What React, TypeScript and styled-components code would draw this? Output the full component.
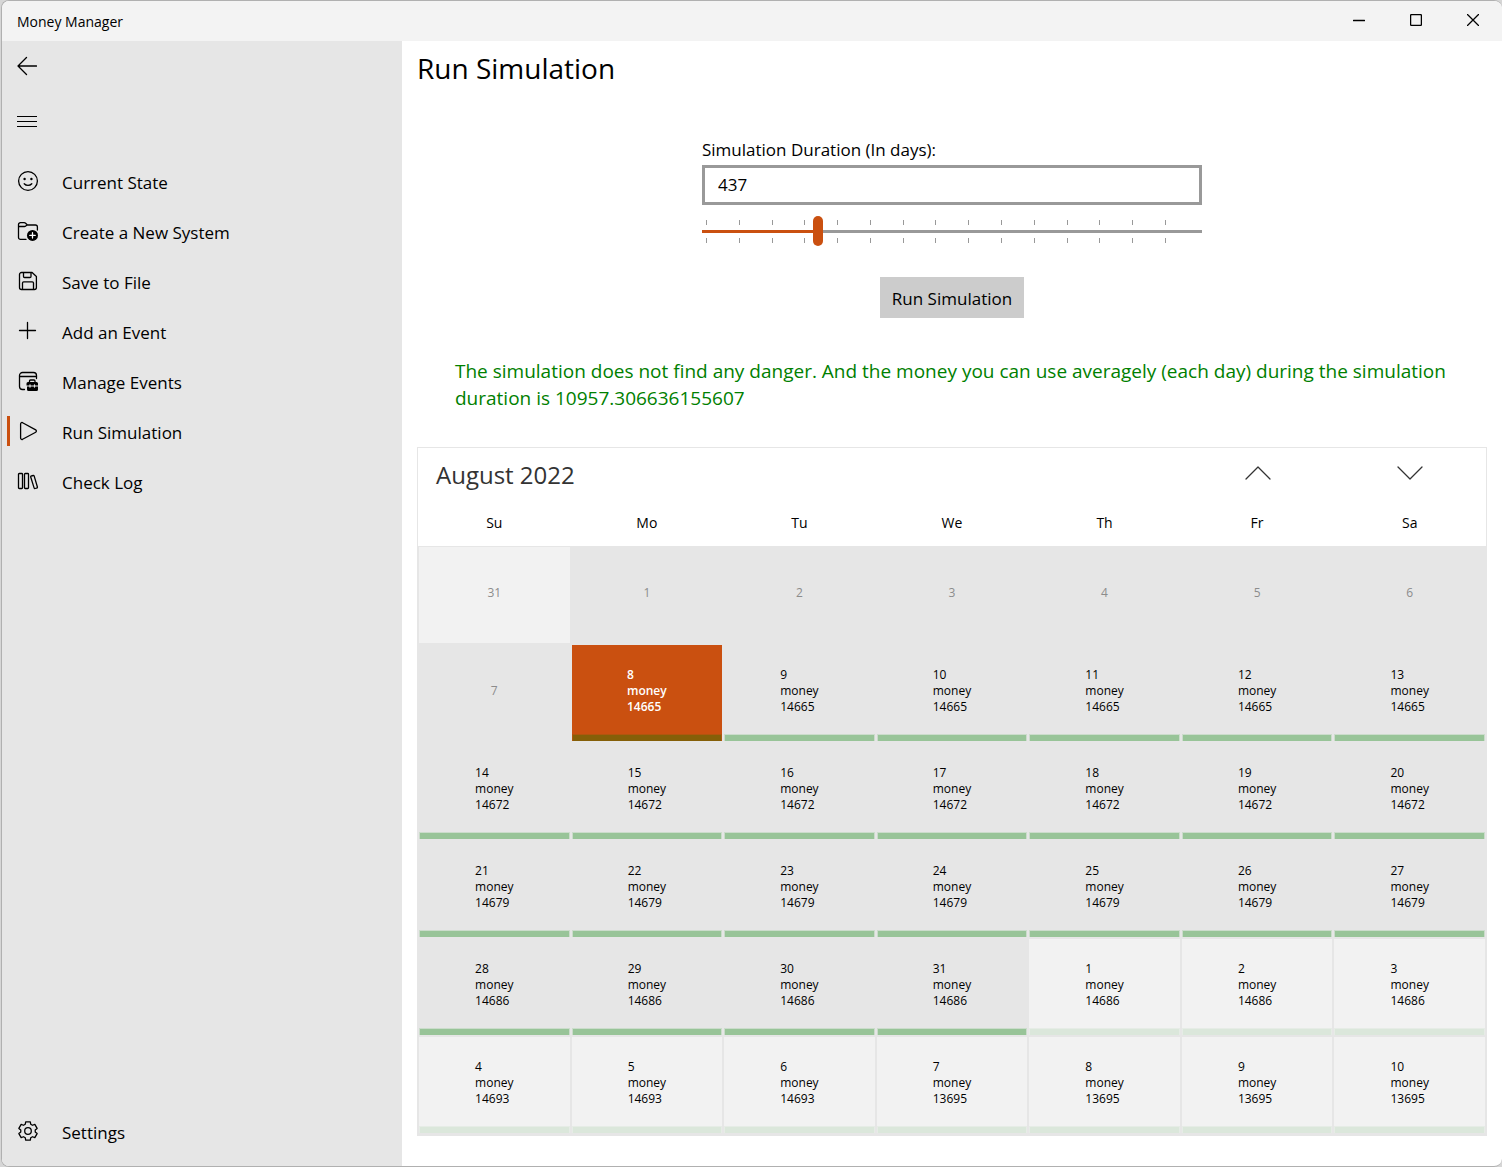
import React, { useState } from "react";
import styled, { createGlobalStyle } from "styled-components";

const accent = "#ca5010";

const GlobalStyle = createGlobalStyle`
  *, *::before, *::after { box-sizing: border-box; }
  body {
    margin: 0;
    background: #d6d6d6;
    color: #000;
    font-family: "Open Sans", "Noto Sans", sans-serif;
    font-size: 17px;
  }
  button, input { font: inherit; color: inherit; }
`;

const Window = styled.div`
  display: flex;
  flex-direction: column;
  min-height: 100vh;
  margin-left: 1px;
  border: 1px solid #b0b0b0;
  border-right: 0;
  border-radius: 8px;
  background: #fff;
  overflow: hidden;
`;

const TitleBar = styled.header`
  display: flex;
  align-items: center;
  justify-content: space-between;
  height: 40px;
  padding: 0 1px 0 15px;
  background: #f3f3f3;
  font-size: 14px;
`;

const Caption = styled.div`
  display: flex;
  height: 100%;
`;

const PlainButton = styled.button`
  display: flex;
  align-items: center;
  justify-content: center;
  padding: 0;
  border: 0;
  background: transparent;
`;

const CaptionButton = styled(PlainButton)`
  width: 57px;
  height: 38px;
`;

const Body = styled.div`
  display: flex;
  flex: 1;
`;

const Sidebar = styled.nav`
  display: flex;
  flex-direction: column;
  flex: 0 0 400px;
  padding-bottom: 9px;
  background: #e6e6e6;
`;

const PaneButton = styled(PlainButton)`
  width: 50px;
  height: 50px;
  margin-bottom: 5px;
`;

const NavList = styled.ul`
  flex: 1;
  margin: 6px 0 0;
  padding: 0;
  list-style: none;
`;

const NavLink = styled.a<{ $active?: boolean }>`
  position: relative;
  display: flex;
  align-items: center;
  gap: 22px;
  height: 50px;
  padding-left: 14px;
  color: inherit;
  text-decoration: none;

  &::before {
    content: "";
    display: ${(p) => (p.$active ? "block" : "none")};
    position: absolute;
    left: 5px;
    top: 9px;
    width: 3px;
    height: 30px;
    background: ${accent};
  }
`;

const Icon = styled.svg`
  flex: none;
  fill: none;
  stroke: currentColor;
  stroke-width: 1.3;
  stroke-linecap: round;
  stroke-linejoin: round;
`;

const Main = styled.main`
  flex: 1;
  min-width: 0;
  padding: 8px 15px 30px;
`;

const PageTitle = styled.h1`
  margin: 0;
  font-size: 28px;
  font-weight: 400;
  line-height: 38px;
`;

const Form = styled.form`
  display: flex;
  flex-direction: column;
  width: 100%;
  max-width: 500px;
  margin: 50px auto 0;
`;

const Label = styled.label`
  padding-bottom: 2px;
  line-height: 26px;
`;

const DaysInput = styled.input`
  height: 40px;
  padding: 0 13px 2px;
  border: 3px solid #999;
  background: #fff;
  outline: 0;
`;

const SliderBox = styled.div`
  display: grid;
  height: 30px;
  margin-top: 11px;
  > * { grid-area: 1 / 1; }
`;

const Ticks = styled.div`
  display: flex;
  justify-content: space-between;
  margin: 4px 36px 3px 4px;
`;

const Tick = styled.span`
  width: 1px;
  border: solid #999;
  border-width: 5px 0;
`;

const Slider = styled.input`
  appearance: none;
  width: 100%;
  height: 30px;
  margin: 0;
  background: transparent;

  &::-webkit-slider-runnable-track {
    height: 3px;
    background: linear-gradient(${accent}, ${accent}) 0 0 / var(--filled) 100% no-repeat #999;
  }
  &::-webkit-slider-thumb {
    appearance: none;
    width: 10px;
    height: 30px;
    margin-top: -14px;
    border-radius: 5px;
    background: ${accent};
  }
`;

const RunButton = styled.button`
  align-self: center;
  width: 144px;
  height: 41px;
  margin-top: 31px;
  padding: 2px 0 0;
  border: 0;
  background: #ccc;
`;

const Result = styled.p`
  margin: 40px 0 35px;
  padding: 0 30px 0 38px;
  color: #008000;
  font-size: 19px;
  line-height: 27px;
`;

const Calendar = styled.section`
  border: 1px solid #e6e6e6;
  border-bottom-width: 2px;
`;

const CalendarBar = styled.div`
  display: grid;
  grid-template-columns: repeat(7, 1fr);
  align-items: center;
  height: 52px;
`;

const Month = styled.h2`
  grid-column: span 5;
  margin: 0;
  padding-left: 18px;
  color: #333;
  font-size: 24px;
  font-weight: 400;
`;

const MonthButton = styled(PlainButton)`
  height: 100%;
  padding: 0 0 2px 1px;
  color: #333;
`;

const Grid = styled.table`
  width: 100%;
  table-layout: fixed;
  border-collapse: collapse;

  th {
    height: 46px;
    padding: 0 0 2px;
    font-size: 14px;
    font-weight: 400;
  }
  td {
    height: 98px;
    padding: 1px;
    background: #e6e6e6;
  }
`;

type Tone = "normal" | "outside" | "selected";
const face = { normal: "#e6e6e6", outside: "#f2f2f2", selected: accent };
const bar = { normal: "#98c498", outside: "#dbe7db", selected: "#855f08" };
const barEdge = { normal: "#cbdccb", outside: "#e6ece6", selected: "#b0560d" };

const Day = styled.button<{ $tone: Tone }>`
  display: flex;
  flex-direction: column;
  align-items: center;
  width: 100%;
  height: 96px;
  padding: 0;
  border: 0;
  background: ${(p) => face[p.$tone]};
  color: ${(p) => (p.$tone === "selected" ? "#fff" : "#000")};
  font-size: 12px;
  font-weight: ${(p) => (p.$tone === "selected" ? 600 : 400)};
  line-height: 16px;
  text-align: left;

  &:disabled { color: #8c8c8c; }
`;

const DayText = styled.span`
  display: flex;
  flex: 1;
  flex-direction: column;
  justify-content: center;
  padding-top: 2px;
`;

const DensityBar = styled.span<{ $tone: Tone }>`
  align-self: stretch;
  height: 7px;
  border: 1px solid ${(p) => barEdge[p.$tone]};
  border-bottom: 0;
  background: ${(p) => bar[p.$tone]};
`;

const Spacer = styled.span`
  height: 7px;
`;

const gearPath = (() => {
  const points: string[] = [];
  for (let i = 0; i < 6; i++) {
    const shape: [number, number][] = [[-22, 7.3], [-14, 9.5], [14, 9.5], [22, 7.3]];
    shape.forEach(([offset, r]) => {
      const a = ((i * 60 + offset) * Math.PI) / 180;
      points.push(`${(12 + r * Math.sin(a)).toFixed(2)} ${(11 - r * Math.cos(a)).toFixed(2)}`);
    });
  }
  return `M${points.join("L")}Z`;
})();

const icons = {
  smile: (
    <>
      <circle cx="12" cy="11" r="9.4" />
      <path d="M8.2 13.8c2 2.2 5.6 2.2 7.6 0" />
      <g fill="currentColor" stroke="none">
        <circle cx="8.6" cy="9" r="1.2" />
        <circle cx="15.4" cy="9" r="1.2" />
      </g>
    </>
  ),
  folder: (
    <>
      <path d="M10 19.4H4.5a2 2 0 0 1-2-2V4.6a2 2 0 0 1 2-2h3.7c.6 0 1 .2 1.4.6L11.4 5h8a2 2 0 0 1 2 2v3M2.5 6.5h6c.5 0 .9-.2 1.2-.5l1.500-1" />
      <circle cx="16.5" cy="15.4" r="5.5" fill="currentColor" stroke="none" />
      <path d="M16.5 12.7v5.4M13.8 15.4h5.4" stroke="#fff" />
    </>
  ),
  save: (
    <path d="M5.5 2.5h10.6L20.4 6.4V17.5a2 2 0 0 1-2 2H5.5a2 2 0 0 1-2-2V4.5a2 2 0 0 1 2-2ZM7.5 2.5v4a1 1 0 0 0 1 1h5.5a1 1 0 0 0 1-1v-4M6.5 19.5v-6.5a1.2 1.2 0 0 1 1.2-1.2h8.6a1.2 1.2 0 0 1 1.2 1.2v6.5" />
  ),
  plus: <path d="M11.5 2.5v16M3.5 10.5h16" />,
  manage: (
    <>
      <path d="M8.5 19.5H6.5a3 3 0 0 1-3-3V5.5a3 3 0 0 1 3-3h11a3 3 0 0 1 3 3v3M3.5 6.5h17" />
      <path
        stroke="none"
        fill="currentColor"
        d="M10.5 13.5a1.5 1.5 0 0 1 1.5-1.5h8.5a1.5 1.5 0 0 1 1.5 1.5v2H10.5ZM11 16.5h11v3a1.5 1.5 0 0 1-1.5 1.5h-8a1.5 1.5 0 0 1-1.5-1.5Z"
      />
      <path d="M13.5 12v-1a1 1 0 0 1 1-1h3.5a1 1 0 0 1 1 1v1" />
      <path d="M14 15v2M18.5 15v2" stroke="#e6e6e6" />
    </>
  ),
  play: <path d="M4.6 3.9v14.2c0 1.1 1 1.7 2 1.2L19.7 12.2c.9-.5.9-1.8 0-2.3L6.6 2.7c-1-.5-2 .1-2 1.2Z" />,
  books: (
    <path d="M3.3 3.5h2.4a.8.8 0 0 1 .8.8V17.7a.8.8 0 0 1-.8.8H3.3a.8.8 0 0 1-.8-.8V4.3a.8.8 0 0 1 .8-.8ZM9.3 3.5h2.4a.8.8 0 0 1 .8.8V17.7a.8.8 0 0 1-.8.8H9.3a.8.8 0 0 1-.8-.8V4.3a.8.8 0 0 1 .8-.8ZM15.3 6l1.9-.5a.8.8 0 0 1 1 .6L21.4 17a.8.8 0 0 1-.6 1l-1.7.5a.8.8 0 0 1-1-.6L14.7 7a.8.8 0 0 1 .6-1Z" />
  ),
  gear: (
    <>
      <path d={gearPath} />
      <circle cx="12" cy="11" r="3.3" />
    </>
  ),
};

type IconName = keyof typeof icons;

const NavIcon = ({ name }: { name: IconName }) => (
  <Icon width="24" height="24" viewBox="0 0 24 24" aria-hidden="true">{icons[name]}</Icon>
);

const navItems: { icon: IconName; text: string }[] = [
  { icon: "smile", text: "Current State" },
  { icon: "folder", text: "Create a New System" },
  { icon: "save", text: "Save to File" },
  { icon: "plus", text: "Add an Event" },
  { icon: "manage", text: "Manage Events" },
  { icon: "play", text: "Run Simulation" },
  { icon: "books", text: "Check Log" },
];

const weekdays = ["Su", "Mo", "Tu", "We", "Th", "Fr", "Sa"];

interface DayInfo { day: number; money?: number; tone: Tone }

const moneyFor = (index: number) => {
  if (index < 8) return undefined;
  if (index >= 38) return 13695;
  return 14665 + 7 * (Math.floor(index / 7) - 1);
};

const weeks: DayInfo[][] = Array.from({ length: 6 }, (_, week) =>
  Array.from({ length: 7 }, (_, column) => {
    const index = week * 7 + column;
    const outside = index === 0 || index > 31;
    return {
      day: index === 0 ? 31 : index > 31 ? index - 31 : index,
      money: moneyFor(index),
      tone: index === 8 ? "selected" : outside ? "outside" : "normal",
    };
  })
);

const minDays = 1;
const maxDays = 1926;

export default function App() {
  const [days, setDays] = useState(437);
  const ratio = Math.min(1, Math.max(0, (days - minDays) / (maxDays - minDays)));

  return (
    <>
      <GlobalStyle />
      <Window>
        <TitleBar>
          <span>Money Manager</span>
          <Caption>
            <CaptionButton aria-label="Minimize">
              <Icon width="12" height="12"><path d="M.5 6.5h11" /></Icon>
            </CaptionButton>
            <CaptionButton aria-label="Maximize">
              <Icon width="12" height="12"><rect x=".6" y=".6" width="10.8" height="10.8" rx="1" /></Icon>
            </CaptionButton>
            <CaptionButton aria-label="Close">
              <Icon width="12" height="12"><path d="M.5.5l11 11M11.5.5l-11 11" /></Icon>
            </CaptionButton>
          </Caption>
        </TitleBar>
        <Body>
          <Sidebar>
            <PaneButton aria-label="Back">
              <Icon width="20" height="20"><path d="M19.5 10H1M9.5 1.5L1 10l8.5 8.5" /></Icon>
            </PaneButton>
            <PaneButton aria-label="Toggle navigation">
              <Icon width="20" height="12">
                <path strokeWidth="1" strokeLinecap="butt" d="M0 1.5h20M0 6.5h20M0 11.5h20" />
              </Icon>
            </PaneButton>
            <NavList>
              {navItems.map((item) => (
                <li key={item.text}>
                  <NavLink href="#" $active={item.icon === "play"}>
                    <NavIcon name={item.icon} />
                    {item.text}
                  </NavLink>
                </li>
              ))}
            </NavList>
            <NavLink href="#">
              <NavIcon name="gear" />
              Settings
            </NavLink>
          </Sidebar>
          <Main>
            <PageTitle>Run Simulation</PageTitle>
            <Form onSubmit={(e) => e.preventDefault()}>
              <Label htmlFor="days">Simulation Duration (In days):</Label>
              <DaysInput id="days" value={days} onChange={(e) => setDays(Number(e.target.value) || 0)} />
              <SliderBox>
                <Ticks aria-hidden="true">
                  {Array.from({ length: 15 }, (_, i) => <Tick key={i} />)}
                </Ticks>
                <Slider
                  type="range"
                  aria-label="Simulation duration"
                  min={minDays}
                  max={maxDays}
                  value={days}
                  onChange={(e) => setDays(Number(e.target.value))}
                  style={{ "--filled": `${ratio * 100}%` } as React.CSSProperties}
                />
              </SliderBox>
              <RunButton type="submit">Run Simulation</RunButton>
            </Form>
            <Result>
              The simulation does not find any danger. And the money you can use averagely (each day) during the simulation duration is 10957.306636155607
            </Result>
            <Calendar>
              <CalendarBar>
                <Month>August 2022</Month>
                <MonthButton aria-label="Previous month">
                  <Icon width="26" height="14"><path d="M1 13L13 1l12 12" /></Icon>
                </MonthButton>
                <MonthButton aria-label="Next month">
                  <Icon width="26" height="14"><path d="M1 1l12 12L25 1" /></Icon>
                </MonthButton>
              </CalendarBar>
              <Grid>
                <thead>
                  <tr>{weekdays.map((name) => <th key={name} scope="col">{name}</th>)}</tr>
                </thead>
                <tbody>
                  {weeks.map((week, row) => (
                    <tr key={row}>
                      {week.map((d) => (
                        <td key={d.day}>
                          <Day $tone={d.tone} disabled={d.money === undefined}>
                            <DayText>
                              <span>{d.day}</span>
                              {d.money !== undefined && <><span>money</span><span>{d.money}</span></>}
                            </DayText>
                            {d.money !== undefined ? <DensityBar $tone={d.tone} /> : <Spacer />}
                          </Day>
                        </td>
                      ))}
                    </tr>
                  ))}
                </tbody>
              </Grid>
            </Calendar>
          </Main>
        </Body>
      </Window>
    </>
  );
}
